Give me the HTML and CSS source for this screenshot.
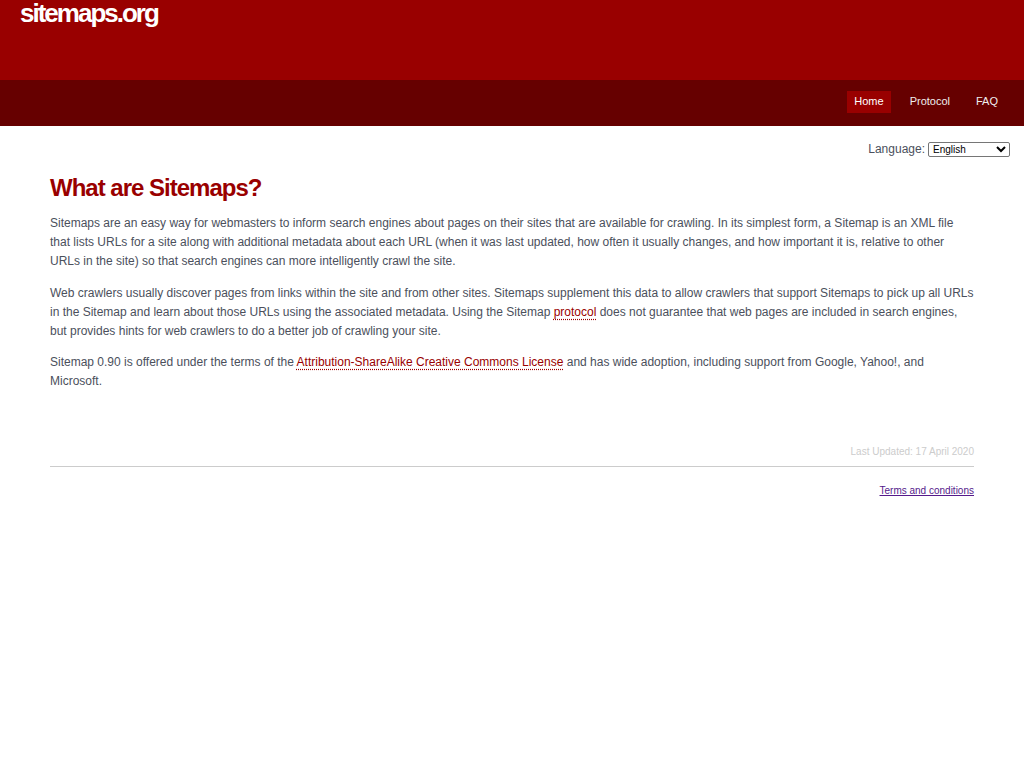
FILE: index.html
```html
<!DOCTYPE html>
<html>
<head>
	<meta charset="utf-8">
	<title>sitemaps.org - Home</title>
	<link rel="stylesheet" href="styles.css">
</head>
<body>
	<div class="header">
		<a class="logo" href="#">sitemaps.org</a>
	</div>
	<div class="navBar">
		<ul class="nav">
			<li><a class="active" href="#">Home</a></li>
			<li><a href="#">Protocol</a></li>
			<li><a href="#">FAQ</a></li>
		</ul>
	</div>
	<div class="language">
		Language:
		<select class="langSelect">
			<option>English</option>
		</select>
	</div>
	<div class="container">
		<h1>What are Sitemaps?</h1>
		<p>Sitemaps are an easy way for webmasters to inform search engines about pages on their sites that are available for crawling. In its simplest form, a Sitemap is an XML file that lists URLs for a site along with additional metadata about each URL (when it was last updated, how often it usually changes, and how important it is, relative to other URLs in the site) so that search engines can more intelligently crawl the site.</p>
		<p>Web crawlers usually discover pages from links within the site and from other sites. Sitemaps supplement this data to allow crawlers that support Sitemaps to pick up all URLs in the Sitemap and learn about those URLs using the associated metadata. Using the Sitemap <a class="link" href="#">protocol</a> does not guarantee that web pages are included in search engines, but provides hints for web crawlers to do a better job of crawling your site.</p>
		<p>Sitemap 0.90 is offered under the terms of the <a class="link" href="#">Attribution-ShareAlike Creative Commons License</a> and has wide adoption, including support from Google, Yahoo!, and Microsoft.</p>
		<div class="updated">Last Updated: 17 April 2020</div>
		<div class="footer">
			<a class="terms" href="#">Terms and conditions</a>
		</div>
	</div>
</body>
</html>
```

FILE: styles.css
```css
html, body {
	margin: 0;
	background: #fff;
	font-family: "Liberation Sans", Arial, sans-serif;
}

.header {
	background: #990000;
	height: 80px;
	padding: 0 20px;
}

.logo {
	display: inline-block;
	color: #fff;
	font-size: 26px;
	line-height: 26px;
	font-weight: bold;
	letter-spacing: -2px;
	text-decoration: none;
}

.navBar {
	background: #660000;
	height: 46px;
}

.nav {
	list-style: none;
	margin: 0;
	padding: 11px 19px 0 0;
	display: flex;
	justify-content: flex-end;
	gap: 12px;
}

.nav a {
	display: block;
	padding: 0 7px 2px 7px;
	line-height: 20px;
	font-size: 11px;
	color: #eee;
	text-decoration: none;
}

.nav a.active {
	background: #990000;
	color: #fff;
}

.language {
	margin-top: 15px;
	padding-right: 14px;
	height: 16px;
	display: flex;
	justify-content: flex-end;
	align-items: center;
	gap: 3px;
	font-size: 12px;
	color: #4b505c;
}

.langSelect {
	width: 82px;
	height: 15px;
	padding: 0;
	font-size: 10px;
	font-family: "Liberation Sans", Arial, sans-serif;
	color: #000;
	background: #fff;
	border: 1px solid #767676;
	border-radius: 2px;
}

.container {
	margin: 0 50px;
}

h1 {
	margin: 17px 0 12px 0;
	font-size: 24px;
	letter-spacing: -1px;
	color: #990000;
}

p {
	margin: 12px 0;
	font-size: 12px;
	line-height: 19.2px;
	color: #4b505c;
}

.link {
	color: #990000;
	text-decoration: underline dotted #990000;
	text-underline-offset: 3px;
}

.updated {
	margin-top: 54px;
	padding-bottom: 9px;
	border-bottom: 1px solid #ccc;
	text-align: right;
	font-size: 10px;
	color: #ccc;
}

.footer {
	padding-top: 18px;
	text-align: right;
	font-size: 10px;
}

.terms {
	color: #551a8b;
}
```
